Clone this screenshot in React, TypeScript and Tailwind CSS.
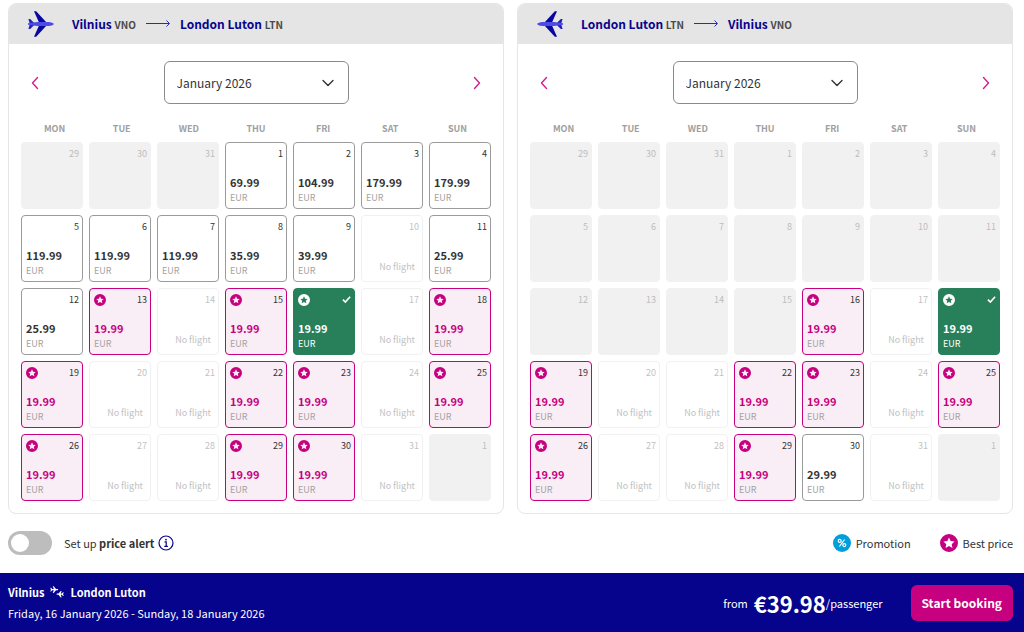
import React, { useState } from 'react';

type Airport = { city: string; code: string };
type Day = { date: number; kind: 'out' | 'none' | 'fare' | 'best'; price?: string };

const VILNIUS: Airport = { city: 'Vilnius', code: 'VNO' };
const LUTON: Airport = { city: 'London Luton', code: 'LTN' };

const weekdays = ['MON', 'TUE', 'WED', 'THU', 'FRI', 'SAT', 'SUN'];

const out = (date: number): Day => ({ date, kind: 'out' });
const none = (date: number): Day => ({ date, kind: 'none' });
const fare = (date: number, price: string): Day => ({ date, kind: 'fare', price });
const best = (date: number): Day => ({ date, kind: 'best', price: '19.99' });

const outboundDays: Day[] = [
  out(29), out(30), out(31), fare(1, '69.99'), fare(2, '104.99'), fare(3, '179.99'), fare(4, '179.99'),
  fare(5, '119.99'), fare(6, '119.99'), fare(7, '119.99'), fare(8, '35.99'), fare(9, '39.99'), none(10), fare(11, '25.99'),
  fare(12, '25.99'), best(13), none(14), best(15), best(16), none(17), best(18),
  best(19), none(20), none(21), best(22), best(23), none(24), best(25),
  best(26), none(27), none(28), best(29), best(30), none(31), out(1),
];

const returnDays: Day[] = [
  out(29), out(30), out(31), out(1), out(2), out(3), out(4),
  out(5), out(6), out(7), out(8), out(9), out(10), out(11),
  out(12), out(13), out(14), out(15), best(16), none(17), best(18),
  best(19), none(20), none(21), best(22), best(23), none(24), best(25),
  best(26), none(27), none(28), best(29), fare(30, '29.99'), none(31), out(1),
];

const PlaneIcon = ({ className = '' }: { className?: string }) => (
  <svg className={`w-[26px] h-[26px] shrink-0 ${className}`} viewBox="0 0 26 26" aria-hidden="true">
    <path d="M6 0.300h2.200L18.500 11.500v3L8.200 25.700H6L11 14.500v-3z" fill="#0a06a0" />
    <path d="M0.400 8h1.800l4 4v2l-4 4H0.400l1.500-5z" fill="#2320b8" />
    <path d="M0 12.200l9-1.200h11c2.400 0 5.800 1 5.800 2s-3.400 2-5.800 2H9l-9-1.200z" fill="#4c4be6" />
  </svg>
);

const RouteArrow = () => (
  <svg className="w-6 h-2 shrink-0" viewBox="0 0 24 8" fill="none" stroke="#2f2ca6" aria-hidden="true">
    <path d="M0 3.500h23M20.500 0.500l3 3-3 3" />
  </svg>
);

const Chevron = ({ d, className }: { d: string; className: string }) => (
  <svg className={className} viewBox="0 0 14 14" fill="none" stroke="currentColor" strokeWidth="1.4" strokeLinecap="round" strokeLinejoin="round" aria-hidden="true">
    <path d={d} />
  </svg>
);

const StarBadge = ({ className }: { className: string }) => (
  <svg className={className} viewBox="0 0 24 24" aria-hidden="true">
    <path
      fill="currentColor"
      fillRule="evenodd"
      d="M12 0a12 12 0 1 0 0 24 12 12 0 0 0 0-24zM12 4.600l2.200 4.700 5.200.6-3.800 3.600 1 5.100L12 16.100l-4.600 2.500 1-5.100-3.800-3.600 5.200-.6z"
    />
  </svg>
);

const cellStyles = {
  out: 'border-[#f1f1f1] bg-[#f1f1f1] text-[#bdbdbd]',
  none: 'border-[#f1f1f1] bg-white text-[#c2c2c2]',
  fare: 'border-[#9b9b9b] bg-white text-[#333333]',
  best: 'border-[#c6007e] bg-[#f9eef6] text-[#c6007e]',
  selected: 'border-[#28805b] bg-[#28805b] text-white',
};

const DayCell = ({ day, selected, onSelect }: { day: Day; selected: boolean; onSelect: () => void }) => {
  const look = selected ? 'selected' : day.kind;

  return (
    <button
      type="button"
      disabled={!day.price}
      aria-pressed={selected}
      onClick={onSelect}
      className={`h-[67px] rounded border py-1 pl-1 pr-[3px] flex flex-col justify-between text-left ${cellStyles[look]}`}
    >
      <span className="w-full h-[13px] flex items-center justify-between text-[9px] leading-[13px]">
        {day.kind === 'best' ? <StarBadge className="w-3 h-3" /> : <span />}
        {selected ? (
          <svg className="w-[9px] h-[9px]" viewBox="0 0 10 10" fill="none" stroke="currentColor" strokeWidth="1.8" aria-label={`${day.date}`}>
            <path d="M1 5.200l2.700 2.600L9 2" />
          </svg>
        ) : (
          <span className={day.price ? 'text-[#333333]' : ''}>{day.date}</span>
        )}
      </span>
      {day.price && (
        <span className="flex flex-col gap-[2px]">
          <span className="text-[11px] leading-4 font-bold">{day.price}</span>
          <span className={`text-[9px] leading-3 ${selected ? 'text-white' : 'text-[#a3a3a3]'}`}>EUR</span>
        </span>
      )}
      {day.kind === 'none' && <span className="w-full pr-1 pb-1 text-right text-[9px] leading-3">No flight</span>}
    </button>
  );
};

type FlightCalendarProps = {
  from: Airport;
  to: Airport;
  days: Day[];
  selected: number;
  onSelect: (index: number) => void;
  inbound?: boolean;
};

const FlightCalendar = ({ from, to, days, selected, onSelect, inbound = false }: FlightCalendarProps) => (
  <section className="flex-1 rounded-lg border border-[#e6e6e6] overflow-hidden">
    <header className="h-10 px-[19px] flex items-center bg-[#e5e5e5]">
      <PlaneIcon className={inbound ? '-scale-x-100' : ''} />
      <h2 className="ml-[18px] flex items-center gap-[10px] text-[12px] leading-4 font-bold text-[#06038d]">
        <span>
          {from.city} <span className="text-[10px] text-[#4a4a4a]">{from.code}</span>
        </span>
        <RouteArrow />
        <span>
          {to.city} <span className="text-[10px] text-[#4a4a4a]">{to.code}</span>
        </span>
      </h2>
    </header>

    <div className="px-3 pb-3 pt-[17px]">
      <div className="flex items-center justify-between text-[#d0218b]">
        <button type="button" aria-label="Previous month" className="w-7 h-7 flex items-center justify-center">
          <Chevron d="M9.500 1.500L4.500 7l5 5.500" className="w-[14px] h-[14px]" />
        </button>
        <div className="relative w-[185px] text-[#333333]">
          <select aria-label="Month" className="w-full h-[43px] pl-3 pr-8 appearance-none rounded-md border border-[#8a8a8a] bg-white text-[12px] leading-4">
            <option>January 2026</option>
          </select>
          <Chevron d="M2 4.500l5 5 5-5" className="absolute right-[14px] top-[15px] w-[14px] h-[14px] pointer-events-none" />
        </div>
        <button type="button" aria-label="Next month" className="w-7 h-7 flex items-center justify-center">
          <Chevron d="M4.500 1.500l5 5.500-5 5.500" className="w-[14px] h-[14px]" />
        </button>
      </div>

      <div className="mt-[17px] grid grid-cols-7 text-center text-[9px] leading-4 font-bold text-[#a0a0a0]">
        {weekdays.map((name) => (
          <span key={name}>{name}</span>
        ))}
      </div>

      <div className="mt-[5px] grid grid-cols-7 gap-[6px]">
        {days.map((day, i) => (
          <DayCell key={i} day={day} selected={i === selected} onSelect={() => onSelect(i)} />
        ))}
      </div>
    </div>
  </section>
);

const App = () => {
  const [outbound, setOutbound] = useState(18);
  const [inbound, setInbound] = useState(20);
  const [alertOn, setAlertOn] = useState(false);

  return (
    <div className="min-h-screen flex flex-col bg-white text-[#333333] font-['Noto_Sans_CJK_SC',sans-serif]">
      <main className="pt-[3px] pl-2 pr-[11px]">
        <div className="flex gap-[13px]">
          <FlightCalendar from={VILNIUS} to={LUTON} days={outboundDays} selected={outbound} onSelect={setOutbound} />
          <FlightCalendar from={LUTON} to={VILNIUS} days={returnDays} selected={inbound} onSelect={setInbound} inbound />
        </div>

        <div className="pt-[17px] pb-[18px] flex items-center justify-between text-[11px] leading-4">
          <div className="flex items-center">
            <label className="flex items-center gap-3 cursor-pointer">
              <input type="checkbox" role="switch" checked={alertOn} onChange={(e) => setAlertOn(e.target.checked)} className="peer sr-only" />
              <span className="w-11 h-6 p-[3px] flex rounded-full bg-[#bdbdbd] peer-checked:justify-end peer-checked:bg-[#c6007e]">
                <span className="w-[18px] h-[18px] rounded-full bg-white" />
              </span>
              <span>
                Set up <b>price alert</b>
              </span>
            </label>
            <button type="button" aria-label="About price alerts" className="ml-1 text-[#06038d]">
              <svg className="w-4 h-4" viewBox="0 0 16 16" fill="none" stroke="currentColor" aria-hidden="true">
                <circle cx="8" cy="8" r="7" strokeWidth="1.200" />
                <path d="M6.500 6.800h1.700v4.400M6.300 11.300h3.600" strokeWidth="1.200" />
                <circle cx="8" cy="4.600" r="0.900" fill="currentColor" stroke="none" />
              </svg>
            </button>
          </div>

          <div className="flex items-center gap-[29px]">
            <span className="flex items-center gap-[5px]">
              <svg className="w-[18px] h-[18px]" viewBox="0 0 18 18" aria-hidden="true">
                <circle cx="9" cy="9" r="9" fill="#009fda" />
                <g fill="none" stroke="#ffffff" strokeWidth="1.200">
                  <circle cx="6.700" cy="6.900" r="1.500" />
                  <circle cx="11.300" cy="11.100" r="1.500" />
                  <path d="M11.600 5.500l-5.200 7" />
                </g>
              </svg>
              Promotion
            </span>
            <span className="flex items-center gap-[5px]">
              <StarBadge className="w-[18px] h-[18px] text-[#c6007e]" />
              Best price
            </span>
          </div>
        </div>
      </main>

      <footer className="flex-1 py-2 pl-2 pr-[11px] flex items-center justify-between bg-[#06038d] text-white">
        <div className="text-[11px] leading-[21px]">
          <p className="flex items-center gap-[6px] font-bold">
            Vilnius
            <svg className="w-[14px] h-3" viewBox="0 0 14 12" fill="#ffffff" aria-hidden="true">
              <path d="M0.300 1.800h.8l1 1.300h1.700L2.700 0.200h1l2.300 2.900h1.600c.8 0 .8 1.100 0 1.100H6L3.700 7.100h-1l1.100-2.900H2.100l-1 1.300H.3l.6-1.800z" />
              <path d="M13.700 6.300h-.8l-1 1.300h-1.200l.9-2.600h-.9L8.500 7.600H7.100c-.8 0-.8 1.100 0 1.100h1.400l2.200 2.900h.9l-.9-2.900h1.200l1 1.300h.8l-.6-1.800z" />
            </svg>
            London Luton
          </p>
          <p>Friday, 16 January 2026 - Sunday, 18 January 2026</p>
        </div>
        <div className="flex items-center">
          <p className="flex items-center text-[11px] leading-6">
            from <b className="ml-[6px] text-[22px]">€39.98</b>/passenger
          </p>
          <button type="button" className="ml-7 h-9 px-[11px] rounded-md bg-[#c6007e] text-[12px] leading-4 font-bold">Start booking</button>
        </div>
      </footer>
    </div>
  );
};

export default App;
